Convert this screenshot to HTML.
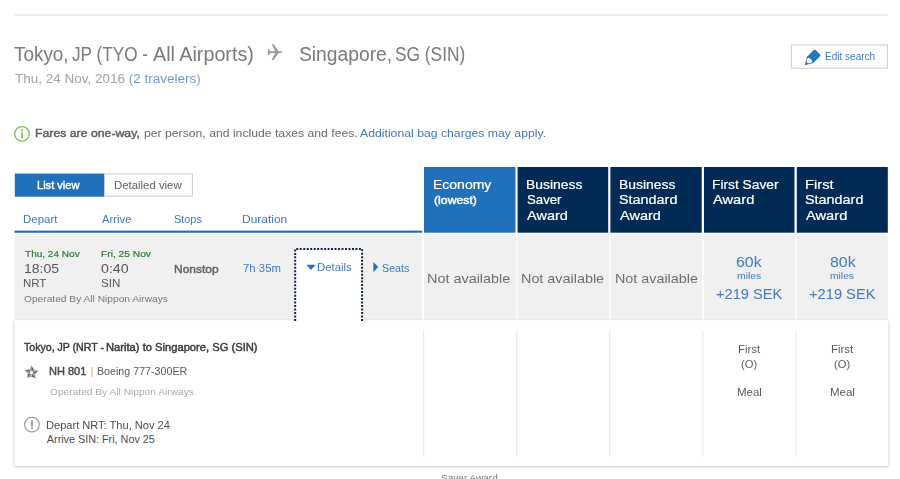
<!DOCTYPE html>
<html lang="en"><head><meta charset="utf-8"><title>Flight search results</title>
<style>
html,body{margin:0;padding:0;background:#fff;}
body{width:900px;height:479px;position:relative;overflow:hidden;font-family:"Liberation Sans","DejaVu Sans",sans-serif;}
.t{position:absolute;white-space:nowrap;transform-origin:0 0;}
.s{position:absolute;}
a{text-decoration:none;color:inherit;}
</style></head><body>
<svg class="s" style="left:0;top:0" width="900" height="479" viewBox="0 0 900 479">
<defs><filter id="sh" x="-2%" y="-10%" width="104%" height="120%"><feGaussianBlur stdDeviation="1.8"/></filter></defs>
<!-- top rule -->
<rect x="14.5" y="14" width="873.3" height="2" fill="#ececec"/>
<!-- plane -->
<path d="M283.6 52.1 280.2 51.2 278.6 51.2 273.6 44.3 271.7 44.3 275.2 51.2 270.4 51.2 268.9 49.2 267.8 49.2 267.8 55 268.9 55 270.4 53 275.2 53 271.7 59.9 273.600 59.9 278.6 53 280.2 53Z" fill="#989898"/>
<!-- edit button -->
<rect x="791.4" y="45" width="96" height="23.200" fill="#fff" stroke="#cdcdcd" stroke-width="1"/>
<g transform="translate(804.7,65.2) rotate(-44.5)"><path d="M0 0 7.6-4.3H17.200Q18.400-4.300 18.400-3.100V3.100Q18.400 4.300 17.200 4.300H7.600Z" fill="#2170ba"/><path d="M3.400 0Q3.400-1.200 5.200-2.200 7-3.200 8.200-2.900 9.300 0 8.200 2.900 7 3.200 5.200 2.200 3.400 1.200 3.400 0Z" fill="#fff"/><path d="M8.800-1.500H18M8.800 1.500H18" stroke="#fff" stroke-opacity=".3" stroke-width=".5"/></g>
<!-- info icon -->
<circle cx="22" cy="133.9" r="7.3" fill="#fff" stroke="#79c257" stroke-width="1.300"/>
<rect x="21.200" y="132.300" width="1.700" height="6" fill="#79c257"/><circle cx="22.050" cy="130.300" r="1.050" fill="#79c257"/>
<!-- tabs -->
<rect x="14.800" y="173.550" width="89.300" height="23.150" fill="#2170ba"/>
<rect x="104.500" y="173.900" width="87.900" height="22.300" fill="#fff" stroke="#cdcdcd" stroke-width="1"/>
<!-- blue rule + gray row -->
<rect x="14.500" y="234.150" width="407.500" height="85.850" fill="#f0f0f0"/>
<rect x="14.500" y="230.650" width="407.600" height="2.100" fill="#1f68b8"/>
<rect x="424" y="167" width="91.50" height="65.7" fill="#2170ba"/><rect x="517.6" y="167" width="90.60" height="65.7" fill="#012b55"/><rect x="610.4" y="167" width="91.30" height="65.7" fill="#012b55"/><rect x="704" y="167" width="90.50" height="65.7" fill="#012b55"/><rect x="796.8" y="167" width="91.00" height="65.7" fill="#012b55"/>
<rect x="424" y="234.1" width="92.00" height="85.9" fill="#f0f0f0"/><rect x="517.4" y="234.1" width="91.60" height="85.9" fill="#f0f0f0"/><rect x="610.4" y="234.1" width="91.80" height="85.9" fill="#f0f0f0"/><rect x="703.7" y="234.1" width="91.50" height="85.9" fill="#f0f0f0"/><rect x="796.7" y="234.1" width="91.10" height="85.9" fill="#f0f0f0"/>
<!-- panel -->
<rect x="14.300" y="321" width="874" height="146" fill="#000" fill-opacity=".21" filter="url(#sh)"/>
<rect x="14.700" y="320.200" width="873.300" height="145.700" fill="#fff"/>
<!-- dotted box -->
<rect x="294.200" y="248" width="68.900" height="73" fill="#fff"/>
<path d="M295.200 321V249H362.100V321" fill="none" stroke="#0c2340" stroke-width="2" stroke-dasharray="2 1.480"/>
<!-- triangles -->
<path d="M306.400 264.700H315.600L311 270.100Z" fill="#2170ba"/>
<path d="M373.400 262V271.900L378.300 266.950Z" fill="#2170ba"/>
<rect x="422.9" y="330.5" width="1.3" height="126" fill="#ebebeb"/><rect x="516" y="330.5" width="1.3" height="126" fill="#ebebeb"/><rect x="609" y="330.5" width="1.3" height="126" fill="#ebebeb"/><rect x="702.2" y="330.5" width="1.3" height="126" fill="#ebebeb"/><rect x="795.4" y="330.5" width="1.3" height="126" fill="#ebebeb"/>
<!-- star alliance -->
<path d="M31.50 365.60L29.60 369.31L30.60 371.04L31.65 371.15Z" fill="#9a9a9a"/><path d="M31.50 365.60L31.65 371.15L32.70 371.26L34.04 369.78Z" fill="#606060"/><path d="M32.70 371.26L34.04 369.78" stroke="#fff" stroke-width=".7"/>
<path d="M38.16 370.44L34.04 369.78L32.70 371.26L32.92 372.30Z" fill="#9a9a9a"/><path d="M38.16 370.44L32.92 372.30L33.14 373.33L34.97 374.15Z" fill="#606060"/><path d="M33.14 373.33L34.97 374.15" stroke="#fff" stroke-width=".7"/>
<path d="M35.61 378.26L34.97 374.15L33.14 373.33L32.23 373.86Z" fill="#9a9a9a"/><path d="M35.61 378.26L32.23 373.86L31.31 374.39L31.10 376.38Z" fill="#606060"/><path d="M31.31 374.39L31.10 376.38" stroke="#fff" stroke-width=".7"/>
<path d="M27.39 378.26L31.10 376.38L31.31 374.39L30.53 373.68Z" fill="#9a9a9a"/><path d="M27.39 378.26L30.53 373.68L29.74 372.97L27.78 373.39Z" fill="#606060"/><path d="M29.74 372.97L27.78 373.39" stroke="#fff" stroke-width=".7"/>
<path d="M24.84 370.44L27.78 373.39L29.74 372.97L30.17 372.01Z" fill="#9a9a9a"/><path d="M24.84 370.44L30.17 372.01L30.60 371.04L29.60 369.31Z" fill="#606060"/><path d="M30.60 371.04L29.60 369.31" stroke="#fff" stroke-width=".7"/>
<!-- alert -->
<circle cx="31.950" cy="424.600" r="7.350" fill="#fff" stroke="#959595" stroke-width="1.100"/>
<rect x="31.200" y="420.400" width="1.600" height="6.100" fill="#888"/><circle cx="32" cy="428.100" r=".95" fill="#888"/>
</svg>
<div class="t" id="t0" style="left:14.34px;top:44.95px;font-size:19.5px;line-height:19.5px;color:#7a7a7a;font-weight:400;transform:scaleX(0.9687);">Tokyo,</div>
<div class="t" id="t1" style="left:71.89px;top:44.95px;font-size:19.5px;line-height:19.5px;color:#7a7a7a;font-weight:400;transform:scaleX(0.8800);">JP (TYO -</div>
<div class="t" id="t2" style="left:152.75px;top:44.95px;font-size:19.5px;line-height:19.5px;color:#7a7a7a;font-weight:400;transform:scaleX(1.0117);">All Airports)</div>
<div class="t" id="t3" style="left:298.56px;top:44.95px;font-size:19.5px;line-height:19.5px;color:#7a7a7a;font-weight:400;transform:scaleX(0.9875);">Singapore,</div>
<div class="t" id="t4" style="left:395.26px;top:44.95px;font-size:19.5px;line-height:19.5px;color:#7a7a7a;font-weight:400;transform:scaleX(0.8877);">SG (SIN)</div>
<div class="t" id="t5" style="left:14.67px;top:72.35px;font-size:13.5px;line-height:13.5px;color:#a3a3a3;font-weight:400;transform:scaleX(0.9997);">Thu, 24 Nov, 2016 (<a style="color:#6f9bd0">2 travelers</a>)</div>
<div class="t" id="t6" style="left:824.87px;top:52.15px;font-size:10.3px;line-height:10.3px;color:#4079be;font-weight:400;transform:scaleX(0.9732);">Edit search</div>
<div class="t" id="t7" style="left:34.98px;top:127.45px;font-size:11.7px;line-height:11.7px;color:#5a5a5a;font-weight:400;-webkit-text-stroke:0.42px;transform:scaleX(1.0499);">Fares are one-way,</div>
<div class="t" id="t8" style="left:143.99px;top:127.45px;font-size:11.7px;line-height:11.7px;color:#6a6a6a;font-weight:400;transform:scaleX(1.0443);">per person, and include taxes and fees.</div>
<div class="t" id="t9" style="left:359.62px;top:127.45px;font-size:11.7px;line-height:11.7px;color:#3f79be;font-weight:400;transform:scaleX(1.0467);"><a>Additional bag charges may apply.</a></div>
<div class="t" id="t10" style="left:37.28px;top:179.60px;font-size:10.8px;line-height:10.8px;color:#fff;font-weight:400;-webkit-text-stroke:0.42px;transform:scaleX(1.0244);">List view</div>
<div class="t" id="t11" style="left:113.86px;top:179.60px;font-size:10.8px;line-height:10.8px;color:#606060;font-weight:400;transform:scaleX(1.0538);">Detailed view</div>
<div class="t" id="t12" style="left:23.01px;top:213.60px;font-size:10.8px;line-height:10.8px;color:#3f79be;font-weight:400;transform:scaleX(1.0635);">Depart</div>
<div class="t" id="t13" style="left:101.87px;top:213.60px;font-size:10.8px;line-height:10.8px;color:#3f79be;font-weight:400;transform:scaleX(1.0450);">Arrive</div>
<div class="t" id="t14" style="left:173.63px;top:213.60px;font-size:10.8px;line-height:10.8px;color:#3f79be;font-weight:400;transform:scaleX(1.0093);">Stops</div>
<div class="t" id="t15" style="left:241.83px;top:213.60px;font-size:10.8px;line-height:10.8px;color:#3f79be;font-weight:400;transform:scaleX(1.1083);">Duration</div>
<div class="t" id="t16" style="left:24.54px;top:248.55px;font-size:9.9px;line-height:9.9px;color:#2c7a3a;font-weight:400;-webkit-text-stroke:0.22px;transform:scaleX(1.0158);">Thu, 24 Nov</div>
<div class="t" id="t17" style="left:101.02px;top:248.55px;font-size:9.9px;line-height:9.9px;color:#2c7a3a;font-weight:400;-webkit-text-stroke:0.22px;transform:scaleX(1.0337);">Fri, 25 Nov</div>
<div class="t" id="t18" style="left:23.85px;top:261.75px;font-size:13.5px;line-height:13.5px;color:#555;font-weight:400;transform:scaleX(1.0388);">18:05</div>
<div class="t" id="t19" style="left:100.70px;top:261.75px;font-size:13.5px;line-height:13.5px;color:#555;font-weight:400;transform:scaleX(1.0495);">0:40</div>
<div class="t" id="t20" style="left:23.05px;top:277.60px;font-size:10.8px;line-height:10.8px;color:#555;font-weight:400;transform:scaleX(1.0602);">NRT</div>
<div class="t" id="t21" style="left:100.60px;top:277.60px;font-size:10.8px;line-height:10.8px;color:#555;font-weight:400;transform:scaleX(1.0746);">SIN</div>
<div class="t" id="t22" style="left:23.89px;top:294.25px;font-size:9.5px;line-height:9.5px;color:#777;font-weight:400;transform:scaleX(1.0732);">Operated By All Nippon Airways</div>
<div class="t" id="t23" style="left:174.23px;top:263.60px;font-size:10.8px;line-height:10.8px;color:#606060;font-weight:400;-webkit-text-stroke:0.42px;transform:scaleX(1.1083);">Nonstop</div>
<div class="t" id="t24" style="left:242.86px;top:262.60px;font-size:10.8px;line-height:10.8px;color:#3f79be;font-weight:400;transform:scaleX(1.0547);">7h 35m</div>
<div class="t" id="t25" style="left:317.03px;top:262.10px;font-size:10.8px;line-height:10.8px;color:#3f79be;font-weight:400;transform:scaleX(1.0551);">Details</div>
<div class="t" id="t26" style="left:381.95px;top:262.60px;font-size:10.8px;line-height:10.8px;color:#3f79be;font-weight:400;transform:scaleX(0.9907);">Seats</div>
<div class="t" id="t27" style="left:433.08px;top:177.75px;font-size:13.5px;line-height:13.5px;color:#fff;font-weight:400;-webkit-text-stroke:0.22px;transform:scaleX(1.0362);">Economy</div>
<div class="t" id="t28" style="left:433.99px;top:194.60px;font-size:10.8px;line-height:10.8px;color:#fff;font-weight:400;-webkit-text-stroke:0.42px;transform:scaleX(1.1361);">(lowest)</div>
<div class="t" id="t29" style="left:525.74px;top:177.75px;font-size:13.5px;line-height:13.5px;color:#fff;font-weight:400;-webkit-text-stroke:0.22px;transform:scaleX(1.0282);">Business</div>
<div class="t" id="t30" style="left:526.76px;top:193.25px;font-size:13.5px;line-height:13.5px;color:#fff;font-weight:400;-webkit-text-stroke:0.22px;transform:scaleX(0.9784);">Saver</div>
<div class="t" id="t31" style="left:526.74px;top:208.75px;font-size:13.5px;line-height:13.5px;color:#fff;font-weight:400;-webkit-text-stroke:0.22px;transform:scaleX(1.0738);">Award</div>
<div class="t" id="t32" style="left:618.74px;top:177.75px;font-size:13.5px;line-height:13.5px;color:#fff;font-weight:400;-webkit-text-stroke:0.22px;transform:scaleX(1.0282);">Business</div>
<div class="t" id="t33" style="left:619.31px;top:193.25px;font-size:13.5px;line-height:13.5px;color:#fff;font-weight:400;-webkit-text-stroke:0.22px;transform:scaleX(1.0654);">Standard</div>
<div class="t" id="t34" style="left:619.74px;top:208.75px;font-size:13.5px;line-height:13.5px;color:#fff;font-weight:400;-webkit-text-stroke:0.22px;transform:scaleX(1.0738);">Award</div>
<div class="t" id="t35" style="left:711.75px;top:177.75px;font-size:13.5px;line-height:13.5px;color:#fff;font-weight:400;-webkit-text-stroke:0.22px;transform:scaleX(1.0195);">First Saver</div>
<div class="t" id="t36" style="left:712.69px;top:193.25px;font-size:13.5px;line-height:13.5px;color:#fff;font-weight:400;-webkit-text-stroke:0.22px;transform:scaleX(1.0872);">Award</div>
<div class="t" id="t37" style="left:804.56px;top:177.75px;font-size:13.5px;line-height:13.5px;color:#fff;font-weight:400;-webkit-text-stroke:0.22px;transform:scaleX(1.0891);">First</div>
<div class="t" id="t38" style="left:805.31px;top:193.25px;font-size:13.5px;line-height:13.5px;color:#fff;font-weight:400;-webkit-text-stroke:0.22px;transform:scaleX(1.0654);">Standard</div>
<div class="t" id="t39" style="left:805.69px;top:208.75px;font-size:13.5px;line-height:13.5px;color:#fff;font-weight:400;-webkit-text-stroke:0.22px;transform:scaleX(1.0872);">Award</div>
<div class="t" id="t40" style="left:427.36px;top:272.05px;font-size:13.5px;line-height:13.5px;color:#6c6c6c;font-weight:400;transform:scaleX(1.0669);">Not available</div>
<div class="t" id="t41" style="left:520.84px;top:272.05px;font-size:13.5px;line-height:13.5px;color:#6c6c6c;font-weight:400;transform:scaleX(1.0643);">Not available</div>
<div class="t" id="t42" style="left:614.89px;top:272.05px;font-size:13.5px;line-height:13.5px;color:#6c6c6c;font-weight:400;transform:scaleX(1.0621);">Not available</div>
<div class="t" id="t43" style="left:736.18px;top:253.85px;font-size:15.3px;line-height:15.3px;color:#3f79be;font-weight:400;transform:scaleX(1.0422);">60k</div>
<div class="t" id="t44" style="left:737.14px;top:270.75px;font-size:9.5px;line-height:9.5px;color:#3f79be;font-weight:400;transform:scaleX(1.0954);">miles</div>
<div class="t" id="t45" style="left:716.22px;top:286.80px;font-size:14.4px;line-height:14.4px;color:#3f79be;font-weight:400;transform:scaleX(1.0156);">+219 SEK</div>
<div class="t" id="t46" style="left:829.74px;top:253.85px;font-size:15.3px;line-height:15.3px;color:#3f79be;font-weight:400;transform:scaleX(1.0417);">80k</div>
<div class="t" id="t47" style="left:830.16px;top:270.75px;font-size:9.5px;line-height:9.5px;color:#3f79be;font-weight:400;transform:scaleX(1.0824);">miles</div>
<div class="t" id="t48" style="left:809.13px;top:286.80px;font-size:14.4px;line-height:14.4px;color:#3f79be;font-weight:400;transform:scaleX(1.0195);">+219 SEK</div>
<div class="t" id="t49" style="left:24.05px;top:341.60px;font-size:10.8px;line-height:10.8px;color:#383838;font-weight:400;-webkit-text-stroke:0.42px;transform:scaleX(0.9797);">Tokyo, JP (NRT -</div>
<div class="t" id="t50" style="left:105.97px;top:341.60px;font-size:10.8px;line-height:10.8px;color:#383838;font-weight:400;-webkit-text-stroke:0.42px;transform:scaleX(1.0351);">Narita) to Singapore, SG (SIN)</div>
<div class="t" id="t51" style="left:48.85px;top:365.60px;font-size:10.8px;line-height:10.8px;color:#484848;font-weight:400;-webkit-text-stroke:0.42px;transform:scaleX(1.0211);">NH 801</div>
<div class="t" id="t52" style="left:89.52px;top:365.60px;font-size:10.8px;line-height:10.8px;color:#efc07f;font-weight:400;transform:scaleX(1.4400);">|</div>
<div class="t" id="t53" style="left:96.89px;top:365.60px;font-size:10.8px;line-height:10.8px;color:#5a5a5a;font-weight:400;transform:scaleX(0.9889);">Boeing 777-300ER</div>
<div class="t" id="t54" style="left:49.78px;top:386.55px;font-size:9.9px;line-height:9.9px;color:#aaa;font-weight:400;transform:scaleX(1.0321);">Operated By All Nippon Airways</div>
<div class="t" id="t55" style="left:45.65px;top:419.60px;font-size:10.8px;line-height:10.8px;color:#4d4d4d;font-weight:400;transform:scaleX(1.0251);">Depart NRT: Thu, Nov 24</div>
<div class="t" id="t56" style="left:46.83px;top:433.60px;font-size:10.8px;line-height:10.8px;color:#4d4d4d;font-weight:400;transform:scaleX(1.0000);">Arrive SIN: Fri, Nov 25</div>
<div class="t" id="t57" style="left:737.96px;top:344.95px;font-size:10.3px;line-height:10.3px;color:#5a5a5a;font-weight:400;transform:scaleX(1.1041);">First</div>
<div class="t" id="t58" style="left:741.32px;top:359.85px;font-size:10.3px;line-height:10.3px;color:#5a5a5a;font-weight:400;transform:scaleX(1.0838);">(O)</div>
<div class="t" id="t59" style="left:737.03px;top:388.35px;font-size:10.3px;line-height:10.3px;color:#5a5a5a;font-weight:400;transform:scaleX(1.1169);">Meal</div>
<div class="t" id="t60" style="left:830.96px;top:344.95px;font-size:10.3px;line-height:10.3px;color:#5a5a5a;font-weight:400;transform:scaleX(1.1041);">First</div>
<div class="t" id="t61" style="left:834.32px;top:359.85px;font-size:10.3px;line-height:10.3px;color:#5a5a5a;font-weight:400;transform:scaleX(1.0838);">(O)</div>
<div class="t" id="t62" style="left:830.03px;top:388.35px;font-size:10.3px;line-height:10.3px;color:#5a5a5a;font-weight:400;transform:scaleX(1.1169);">Meal</div>
<div class="t" id="t63" style="left:440.86px;top:472.55px;font-size:9.9px;line-height:9.9px;color:#777;font-weight:400;transform:scaleX(1.0164);">Saver Award</div>
</body></html>
